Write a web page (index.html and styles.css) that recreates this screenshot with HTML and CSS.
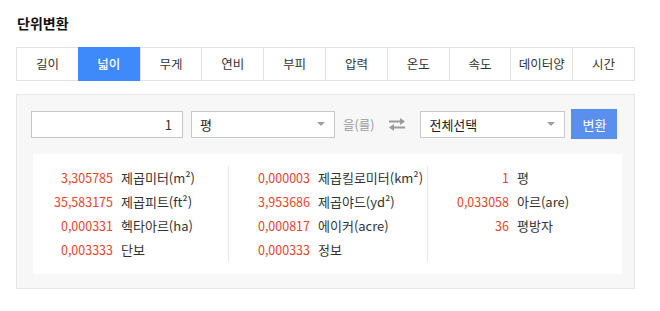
FILE: index.html
```html
<!DOCTYPE html>
<html lang="ko">
<head>
    <meta charset="UTF-8">
    <title>단위변환</title>
    <link rel="stylesheet" href="styles.css">
</head>
<body>
<div class="converter">
    <h2 class="title">단위변환</h2>
    <ul class="tab-list">
        <li>길이</li>
        <li class="current">넓이</li>
        <li>무게</li>
        <li>연비</li>
        <li>부피</li>
        <li>압력</li>
        <li>온도</li>
        <li>속도</li>
        <li>데이터양</li>
        <li>시간</li>
    </ul>
    <div class="panel">
        <div class="form-row">
            <input class="num-input" type="text" value="1">
            <div class="select select-from">
                <span>평</span>
                <i class="caret"></i>
            </div>
            <span class="josa">을(를)</span>
            <svg class="swap" width="16" height="13" viewBox="0 0 16 13">
                <path d="M0 3.5h12" stroke="#9a9a9a" stroke-width="2" fill="none"/>
                <path d="M11 0l5 3.5-5 3.5z" fill="#9a9a9a"/>
                <path d="M4 9.5h12" stroke="#9a9a9a" stroke-width="2" fill="none"/>
                <path d="M5 6l-5 3.5 5 3.5z" fill="#9a9a9a"/>
            </svg>
            <div class="select select-to">
                <span>전체선택</span>
                <i class="caret"></i>
            </div>
            <button class="btn-convert">변환</button>
        </div>
        <div class="result">
            <ul class="result-col">
                <li><em>3,305785</em><span>제곱미터(m²)</span></li>
                <li><em>35,583175</em><span>제곱피트(ft²)</span></li>
                <li><em>0,000331</em><span>헥타아르(ha)</span></li>
                <li><em>0,003333</em><span>단보</span></li>
            </ul>
            <ul class="result-col">
                <li><em>0,000003</em><span>제곱킬로미터(km²)</span></li>
                <li><em>3,953686</em><span>제곱야드(yd²)</span></li>
                <li><em>0,000817</em><span>에이커(acre)</span></li>
                <li><em>0,000333</em><span>정보</span></li>
            </ul>
            <ul class="result-col">
                <li><em>1</em><span>평</span></li>
                <li><em>0,033058</em><span>아르(are)</span></li>
                <li><em>36</em><span>평방자</span></li>
            </ul>
        </div>
    </div>
</div>
</body>
</html>
```

FILE: styles.css
```css
body, div, ul, li, h2, input, button {
    margin: 0;
    padding: 0;
}

body {
    background: #fff;
    font-family: "Noto Sans CJK KR", "Noto Sans", sans-serif;
    color: #333;
}

ul {
    list-style: none;
}

.converter {
    width: 619px;
    padding: 12px 0 0 16px;
}

.title {
    font-size: 14px;
    font-weight: bold;
    line-height: 22px;
    color: #111;
    padding-left: 1px;
    margin-bottom: 13px;
}

.tab-list {
    display: grid;
    grid-template-columns: repeat(10, 1fr);
    border: 1px solid #e2e2e2;
    border-right: 0;
    height: 32px;
}

.tab-list li {
    border-right: 1px solid #e2e2e2;
    font-size: 12.5px;
    line-height: 32px;
    text-align: center;
    color: #333;
}

.tab-list li.current {
    background-color: #3e8afa;
    color: #fff;
    font-weight: 500;
    margin: -1px 0 0 -1px;
    height: 34px;
    line-height: 34px;
}

.panel {
    margin-top: 13px;
    border: 1px solid #e6e6e6;
    background: #f7f7f7;
    padding: 14px 13px 14px 15px;
}

.form-row {
    display: flex;
    align-items: center;
    height: 30px;
}

.num-input {
    width: 152px;
    height: 27px;
    box-sizing: border-box;
    border: 1px solid #c6c6c6;
    background: #fff;
    text-align: right;
    padding-right: 10px;
    font-family: "Noto Sans CJK KR", sans-serif;
    font-size: 13px;
    color: #333;
    outline: none;
    margin-left: -1px;
}

.select {
    display: flex;
    align-items: center;
    justify-content: space-between;
    height: 27px;
    box-sizing: border-box;
    border: 1px solid #c9c9c9;
    background: #fff;
    padding: 0 9px 0 8px;
    font-size: 13px;
    color: #222;
}

.select-from {
    width: 144px;
    margin-left: 8px;
}

.select-to {
    width: 145px;
}

.caret {
    width: 0;
    height: 0;
    border-left: 4px solid transparent;
    border-right: 4px solid transparent;
    border-top: 4px solid #9e9e9e;
}

.josa {
    margin-left: 8px;
    font-size: 12.5px;
    color: #999;
}

.swap {
    margin: 0 15px;
}

.btn-convert {
    width: 46px;
    height: 30px;
    margin-left: 6px;
    border: 0;
    background: #5a8fee;
    color: #fff;
    font-family: "Noto Sans CJK KR", sans-serif;
    font-size: 13px;
}

.result {
    display: grid;
    grid-template-columns: 195px 199px 195px;
    margin-top: 15px;
    margin-left: 1px;
    width: 589px;
    background: #fff;
    padding: 12px 0;
}

.result-col {
    height: 96px;
}

.result-col + .result-col {
    border-left: 1px solid #e8e8e8;
}

.result-col li {
    display: flex;
    align-items: center;
    height: 24px;
    margin-top: -1px;
    margin-bottom: 1px;
    font-size: 13px;
}

.result-col em {
    font-style: normal;
    width: 80px;
    text-align: right;
    color: #e6452c;
    font-size: 12.5px;
    margin-right: 8px;
}

.result-col + .result-col em {
    width: 81px;
}

.result-col span {
    color: #333;
}
```
